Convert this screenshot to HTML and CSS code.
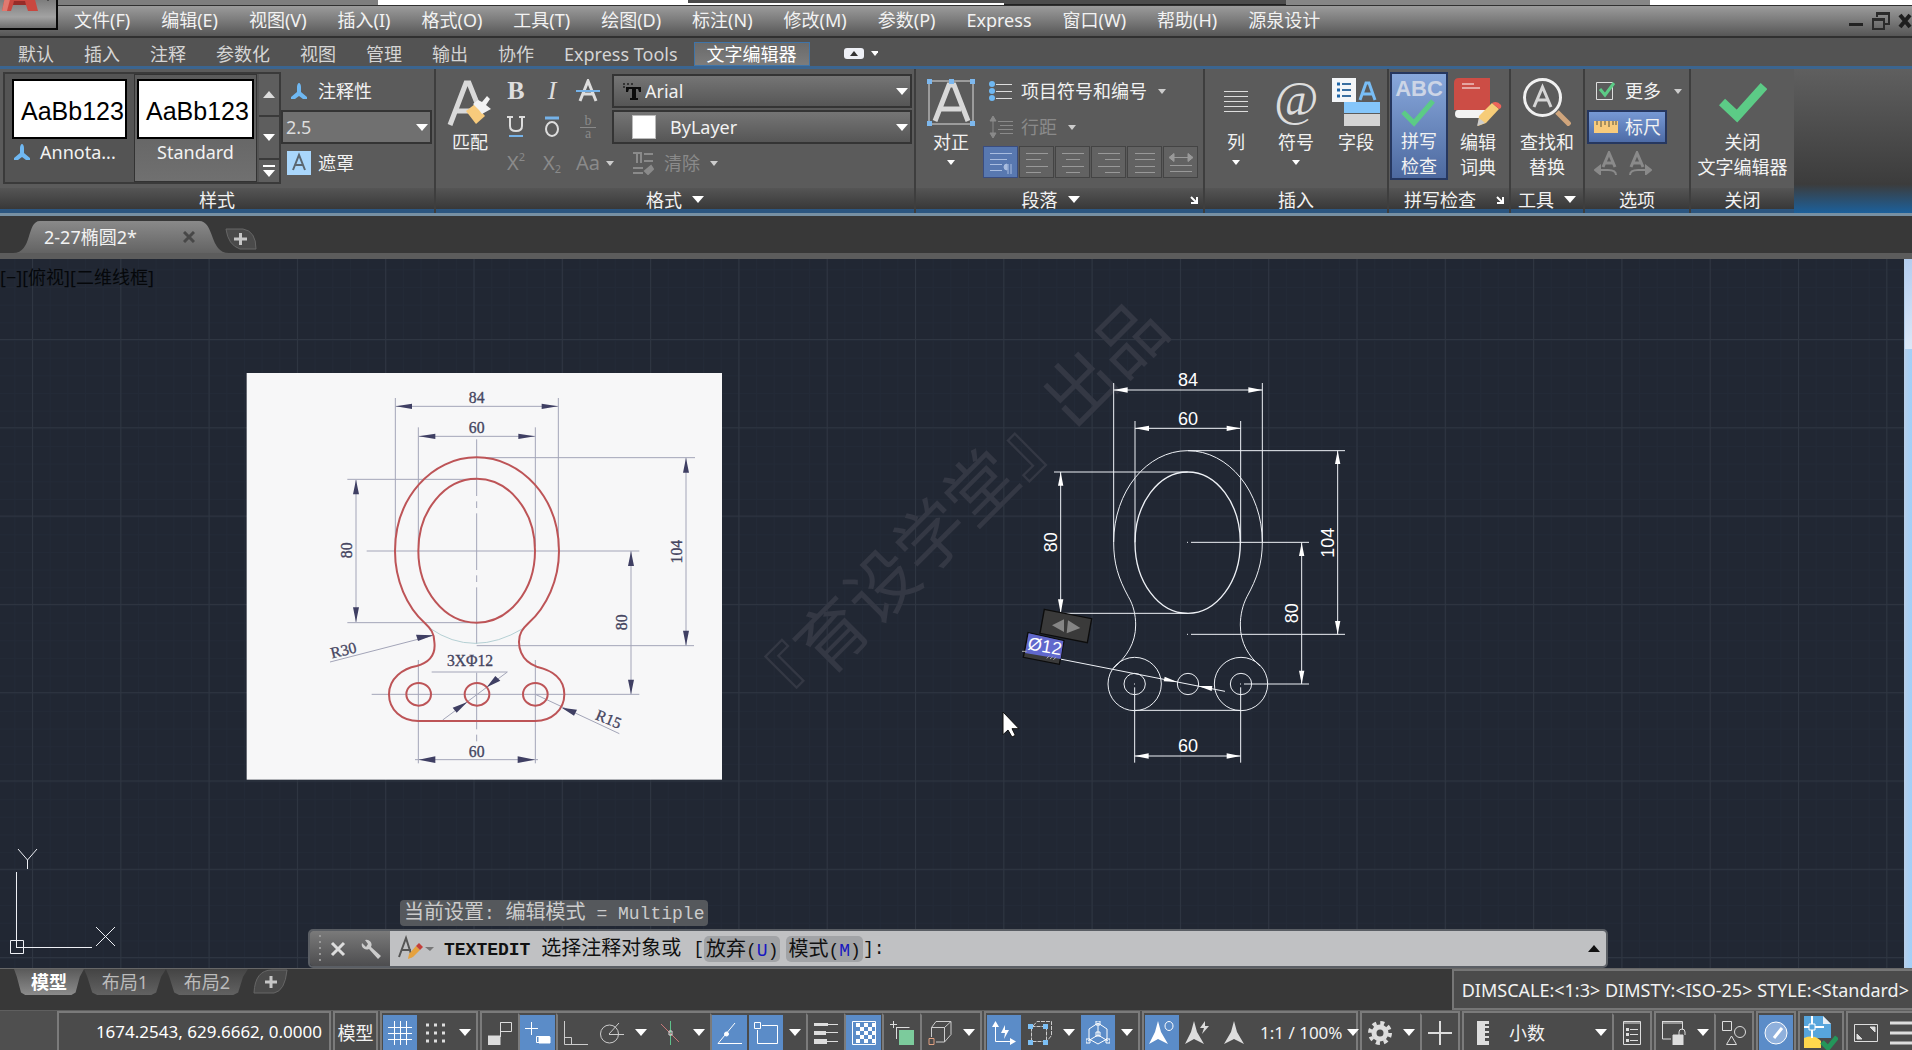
FILE: index.html
```html
<!DOCTYPE html>
<html lang="zh-CN">
<head>
<meta charset="utf-8">
<title>2-27椭圆2</title>
<link rel="stylesheet" href="styles.css">
</head>
<body>
<header class="top">
  <button class="app-logo" aria-label="应用程序菜单"><svg width="57" height="29" viewBox="0 0 57 29"><path d="M6 -8H33L38 11H28L26 5H13L11 11H2Z" fill="#c9473f"/><path d="M6 -8L2 11H7L12 -8Z" fill="#e07a70"/><path d="M13 5H26L25 1H14Z" fill="#962c28"/><path d="M46 -1h4l-2 2z" fill="#222"/></svg></button>
  <div class="strip"><i class="strip-a"></i><i class="strip-b"></i><i class="strip-c"></i><i class="strip-d"></i><i class="strip-e"></i></div>
  <nav class="menubar">
    <button>文件(F)</button><button>编辑(E)</button><button>视图(V)</button><button>插入(I)</button><button>格式(O)</button><button>工具(T)</button><button>绘图(D)</button><button>标注(N)</button><button>修改(M)</button><button>参数(P)</button><button>Express</button><button>窗口(W)</button><button>帮助(H)</button><button>源泉设计</button>
    <div class="winbtns">
      <button aria-label="最小化"><svg width="16" height="20"><path d="M1 12h14v3H1z" fill="#222"/></svg></button>
      <button aria-label="还原"><svg width="20" height="20" fill="none" stroke="#2a2a2a" stroke-width="2"><path d="M6 6V2h12v11h-4M6 3h12M2 8h11v10H2zM2 9h11"/></svg></button>
      <button aria-label="关闭"><svg width="14" height="20"><path d="M2 4l10 12M12 4L2 16" stroke="#1e1e1e" stroke-width="4"/></svg></button>
    </div>
  </nav>
  <nav class="tabs">
    <button>默认</button><button>插入</button><button>注释</button><button>参数化</button><button>视图</button><button>管理</button><button>输出</button><button>协作</button><button>Express Tools</button><button class="on">文字编辑器</button>
    <button class="mini" aria-label="最小化功能区"><svg width="34" height="12"><rect width="20" height="11" rx="3" fill="#eef0f6"/><path d="M6 8h8l-4-5z" fill="#333"/><path d="M27 3h8l-4 5z" fill="#fff"/></svg></button>
  </nav>
</header>

<main class="ribbon">
  <section class="panel p-style">
    <div class="body">
      <div class="gallery">
        <button class="sample"><span class="prev">AaBb123</span><span class="cap"><svg width="16" height="16" viewBox="0 0 16 16"><path d="M8 0C9 0 10 2 10 4V9L16 14V16H12L8 13L4 16H0V14L6 9V4C6 2 7 0 8 0Z" fill="#6fb8f2"/></svg>Annota...</span></button>
        <button class="sample sel"><span class="prev">AaBb123</span><span class="cap">Standard</span></button>
        <div class="scroll"><button aria-label="上一行"><i class="tri up"></i></button><button aria-label="下一行"><i class="tri"></i></button><button aria-label="展开"><svg width="14" height="14"><path d="M1 1h12v2H1zM1 6h12l-6 7z" fill="#fff"/></svg></button></div>
      </div>
      <div class="rows style-rows">
        <button class="line"><svg width="24" height="18" viewBox="-4 0 24 18"><path d="M8 1C9 1 10 3 10 5V10L16 15V17H12L8 14L4 17H0V15L6 10V5C6 3 7 1 8 1Z" fill="#6fb8f2"/></svg>注释性</button>
        <span class="combo flat"><select aria-label="文字高度"><option>2.5</option></select><i class="tri"></i></span>
        <button class="line"><svg width="24" height="24" viewBox="0 0 24 24"><path d="M0 0h24v24H0z" fill="#a9d6fb"/><path d="M6 19L12 4L18 19M8 14H16" fill="none" stroke="#5b6670" stroke-width="2"/></svg>遮罩</button>
      </div>
    </div>
    <h2>样式</h2>
  </section>

  <section class="panel p-format">
    <div class="body">
      <button class="big match"><svg width="48" height="48" viewBox="0 0 48 48"><path d="M4 47L20 5H23L33 30M10 33H28" fill="none" stroke="#d9d9d9" stroke-width="5"/><path d="M20 33L29 26L39 38L30 46Z" fill="#f8cb7c"/><path d="M27 26L33 32L36 36L45 31L40 27L44 21L41 18L36 24L32 22Z" fill="#f2f2f2"/></svg>匹配</button>
      <div class="glyphs">
        <button aria-label="粗体" class="serif b">B</button><button aria-label="斜体" class="serif it">I</button><button aria-label="删除线"><svg width="24" height="24"><path d="M4 22L12 2L20 22M7 15H17" fill="none" stroke="#ddd" stroke-width="3"/><path d="M0 12h24" stroke="#75b2e8" stroke-width="2"/></svg></button>
        <button aria-label="下划线"><svg width="20" height="24"><path d="M4 2V11Q4 16 10 16T16 11V2M1 2h6M13 2h6" fill="none" stroke="#ddd" stroke-width="2"/><path d="M3 21h14" stroke="#75b2e8" stroke-width="2"/></svg></button><button aria-label="上划线"><svg width="20" height="24"><ellipse cx="10" cy="14" rx="6" ry="7" fill="none" stroke="#ddd" stroke-width="2"/><path d="M3 3h14" stroke="#75b2e8" stroke-width="3"/></svg></button><button aria-label="堆叠" class="stack dim"><span>b</span><span>a</span></button>
        <button aria-label="上标" class="dim">X<sup>2</sup></button><button aria-label="下标" class="dim">X<sub>2</sub></button><button aria-label="更改大小写" class="dim">Aa</button>
      </div>
      <div class="rows format-rows">
        <span class="combo"><svg width="20" height="20"><path d="M1 3h2M5 3h2M9 3h2M1 6h2" stroke="#333" stroke-width="2"/><path d="M4 6H19V11H17L16 8H14V17H16V19H8V17H10V8H7L6 11H4Z" fill="#0b0b0b"/></svg><select aria-label="字体"><option>Arial</option></select><i class="tri"></i></span>
        <span class="combo layer"><i class="swatch"></i><select aria-label="颜色"><option>ByLayer</option></select><i class="tri"></i></span>
        <span class="line"><button aria-label="大小写菜单"><i class="tri sm"></i></button><button class="clear dim"><svg width="22" height="24" fill="none" stroke="#8a8a8a" stroke-width="2"><path d="M5 1v11M9 1v11M1 2h9M12 3h9M12 10h9M1 17h10M1 22h10"/><path d="M13 20l6-5 2 3-5 5z" fill="#8a8a8a"/></svg>清除<i class="tri sm"></i></button></span>
      </div>
    </div>
    <h2>格式<i class="tri"></i></h2>
  </section>

  <section class="panel p-para">
    <div class="body">
      <button class="big"><svg width="48" height="48" viewBox="0 0 48 48"><path d="M2 3H46V46H2Z" fill="none" stroke="#ddd"/><path d="M8 43L22 7H27L41 43M14 31H34" fill="none" stroke="#d8d8d8" stroke-width="5"/><path d="M0 1h5v5H0zM22 1h5v5h-5zM43 1h5v5h-5zM0 43h5v5H0zM43 43h5v5h-5z" fill="#7db8ee"/></svg>对正<i class="tri sm"></i></button>
      <div class="rows">
        <button class="line"><svg width="24" height="20" stroke="#ddd" stroke-width="1"><path d="M7 3.500h16M7 10.500h16M7 17.500h16"/><g fill="#6fb8f2" stroke="none"><circle cx="3" cy="3" r="3"/><circle cx="3" cy="10" r="3"/><circle cx="3" cy="17" r="3"/></g></svg>项目符号和编号<i class="tri sm"></i></button>
        <button class="line dim"><svg width="24" height="24" stroke="#8a8a8a" fill="#8a8a8a"><path d="M4 3v18M9 6.500h15M11 10.500h13M9 14.500h15M11 18.500h13"/><path d="M1 6L4 1l3 5zM1 18l3 5 3-5z"/></svg>行距<i class="tri sm"></i></button>
        <div class="align">
          <button class="on" aria-label="默认"><svg width="24" height="24" fill="none" stroke="#a9bde0"><path d="M1 3.500h22M1 9.500h17M1 14.500h12M1 20.500h12M19 14v10M22 14v10"/><path d="M18 20a3 3 0 0 1 0-6z" fill="#a9bde0"/></svg></button><button aria-label="左对齐"><svg width="24" height="24" stroke="#999"><path d="M1 3.500h22M1 9.500h15M1 16.500h22M1 22.500h15"/></svg></button><button aria-label="居中"><svg width="24" height="24" stroke="#999"><path d="M1 3.500h22M5 9.500h14M1 16.500h22M5 22.500h14"/></svg></button><button aria-label="右对齐"><svg width="24" height="24" stroke="#999"><path d="M1 3.500h22M8 9.500h15M1 16.500h22M8 22.500h15"/></svg></button><button aria-label="两端对齐"><svg width="24" height="24" stroke="#999"><path d="M2 3.500h20M2 9.500h20M2 16.500h20M2 22.500h20"/></svg></button><button aria-label="分散对齐"><svg width="24" height="24" stroke="#999" fill="#999"><path d="M3 7.500h18M1 15.500h22M1 21.500h22"/><path d="M0 7.500l5-4v8zM24 7.500l-5-4v8z"/></svg></button>
        </div>
      </div>
    </div>
    <h2 class="haslaunch">段落<i class="tri"></i><svg class="launch" width="8" height="8"><path d="M1 1l5 5M7 1v6H1" fill="none" stroke="#fff" stroke-width="2"/></svg></h2>
  </section>

  <section class="panel p-insert">
    <div class="body">
      <button class="big"><svg width="48" height="48" stroke="#ddd"><path d="M12 13.500h24M12 18.500h24M12 23.500h24M12 28.500h24M12 33.500h24"/></svg>列<i class="tri sm"></i></button>
      <button class="big"><span class="at">@</span>符号<i class="tri sm"></i></button>
      <button class="big"><svg width="48" height="48" viewBox="0 0 48 48"><path d="M0 0h24v24H0z" fill="#f4f6f8"/><path d="M5 6h3M5 12h3M5 18h3" stroke="#1e66a8" stroke-width="3"/><path d="M10 6h9M10 12h9M10 18h9" stroke="#3a6fa0" stroke-width="2"/><path d="M28 22L34 5H37L43 22M31 16H40" fill="none" stroke="#78bdf5" stroke-width="3"/><path d="M12 24h36v11H12z" fill="#84c6fb"/><path d="M12 36h36v12H12z" fill="#d4d4d4"/></svg>字段</button>
    </div>
    <h2>插入</h2>
  </section>

  <section class="panel p-spell">
    <div class="body">
      <button class="big on"><span class="abc">ABC</span><svg width="48" height="28" viewBox="0 0 48 28"><path d="M8 13L19 24L38 2" fill="none" stroke="#5ccb86" stroke-width="5"/></svg><span>拼写<br>检查</span></button>
      <button class="big"><svg width="48" height="48" viewBox="0 0 48 48"><path d="M5 0H36V32H0V5Q0 0 5 0Z" fill="#cc4d45"/><path d="M8 6H20M8 10H26" stroke="#fff"/><path d="M4 32H31V40H5Q1 40 1 36Q1 32 4 32Z" fill="#f3f3f3"/><path d="M25 38L38 25L45 31L32 45L24 48Z" fill="#f6cc78"/><path d="M38 25Q43 22 47 27Q48 30 45 31Z" fill="#f0645a"/><path d="M25 40L31 45L23 48Z" fill="#ccc"/></svg><span>编辑<br>词典</span></button>
    </div>
    <h2 class="haslaunch">拼写检查<svg class="launch" width="8" height="8"><path d="M1 1l5 5M7 1v6H1" fill="none" stroke="#fff" stroke-width="2"/></svg></h2>
  </section>

  <section class="panel p-tool">
    <div class="body">
      <button class="big"><svg width="48" height="48" viewBox="0 0 48 48"><circle cx="19.500" cy="19.500" r="18" fill="none" stroke="#f1f1f1" stroke-width="3"/><path d="M11 29L19.500 9L28 29M14 22H25" fill="none" stroke="#d6d6d6" stroke-width="3"/><path d="M34 34L47 47" stroke="#d0a57c" stroke-width="5"/></svg><span>查找和<br>替换</span></button>
    </div>
    <h2>工具<i class="tri"></i></h2>
  </section>

  <section class="panel p-opt">
    <div class="body">
      <div class="rows">
        <button class="line"><svg width="24" height="20" fill="none"><path d="M2.500 1.500h16v17h-16z" stroke="#ddd"/><path d="M6 8l5 6L20 2" stroke="#5ccb86" stroke-width="3"/></svg>更多<i class="tri sm"></i></button>
        <button class="line ruler"><svg width="24" height="12"><path d="M0 0h24v12H0z" fill="#f8cb7c"/><path d="M3 0v4M7 0v6M11 0v4M15 0v6M19 0v4M22 0v4" stroke="#554"/></svg>标尺</button>
        <span class="line undo"><button aria-label="放弃"><svg width="24" height="24" fill="none" stroke="#8a8a8a" stroke-width="2"><path d="M9 16L15 2L21 16M11 12h8" stroke-width="3"/><path d="M22 24q0-5-8-5H5"/><path d="M6 15L1 19l5 4z" fill="#8a8a8a"/></svg></button><button aria-label="重做"><svg width="24" height="24" fill="none" stroke="#8a8a8a" stroke-width="2"><path d="M3 16L9 2L15 16M5 12h8" stroke-width="3"/><path d="M2 24q0-5 8-5H19"/><path d="M18 15l5 4-5 4z" fill="#8a8a8a"/></svg></button></span>
      </div>
    </div>
    <h2>选项</h2>
  </section>

  <section class="panel p-close">
    <div class="body">
      <button class="big"><svg width="48" height="48" viewBox="0 0 48 48"><path d="M3 24L18 38L45 8" fill="none" stroke="#5ccb86" stroke-width="9"/></svg><span>关闭<br>文字编辑器</span></button>
    </div>
    <h2>关闭</h2>
  </section>
  <div class="rest"></div>
</main>

<nav class="doctabs">
  <div class="doctab"><svg class="tabshape" width="216" height="32" viewBox="0 0 216 32"><defs><linearGradient id="tg" x1="0" y1="0" x2="0" y2="1"><stop offset="0" stop-color="#8a8a8a"/><stop offset="1" stop-color="#636363"/></linearGradient></defs><path d="M0 32C20 32 13 0 27 0H186C202 0 196 32 216 32Z" fill="url(#tg)"/></svg><button class="name">2-27椭圆2*</button><button aria-label="关闭图形"><svg width="12" height="12"><path d="M1 1l10 10M11 1L1 11" stroke="#484848" stroke-width="3"/></svg></button></div>
  <button class="newtab" aria-label="新图形"><svg width="32" height="22"><path d="M1 1H18Q31 3 31 21H15Q3 17 1 1Z" fill="#4a4a4a" stroke="#666"/><path d="M9 11h13M15.500 5v12" stroke="#c6c6c6" stroke-width="3"/></svg></button>
</nav>

<section class="canvas">
  <svg class="sheet" width="100%" height="100%">
    <defs>
      <pattern id="minor" patternUnits="userSpaceOnUse" x="32" y="81" width="17.660" height="17.660"><path d="M0 .5H18M.5 0V18" stroke="#232a37"/></pattern>
      <pattern id="major" patternUnits="userSpaceOnUse" x="32" y="80" width="88.300" height="88.300"><path d="M0 .5H89M.5 0V89" stroke="#2f3642"/></pattern>
    </defs>
    <rect width="100%" height="100%" fill="#212733"/><rect width="100%" height="100%" fill="url(#minor)"/><rect width="100%" height="100%" fill="url(#major)"/>
    <text class="mark" transform="translate(955 252) rotate(-45)" text-anchor="middle" dominant-baseline="central">『育设学堂』出品</text>
    <svg x="240" y="101" width="490" height="430" viewBox="0 0 1470 1290">
      <rect x="20" y="39" width="1426" height="1220" fill="#f7f7f8"/>
      <g fill="none" stroke="#a3a5b8" stroke-width="3">
        <path d="M466 114V560M955 114V560M535 202V560M886 202V560M466 139H955M535 229H886M740 293H1365M322 358H710M322 788H700M348 360V786M1338 293V857M710 857H1362M1173 573V1003M380 573H1198M395 1003H1198M535 900V1210M886 900V1210M525 1199H894M575 936H802L608 1080M270 906L580 826M886 1003L1138 1121"/>
        <path d="M710 238V855M710 938V1145" stroke-dasharray="170 16 20 16"/>
        <path d="M570 805Q700 895 850 805" stroke="#b5d0d4"/>
      </g>
      <g fill="#3f3f63"><path d="M467 139l49-8v16zM954 139l-49-8v16zM536 229l50-8v16zM885 229l-50-8v16zM536 1199l50-10v20zM885 1199l-52-10v20zM348 359l-9 44h18zM348 787l-9-45h18zM1338 294l-9 44h18zM1338 857l-9-45h18zM1173 574l-9 44h18zM1173 1003l-9-44h18zM580 826l-52-2 6 19zM740 982l26-34 15 14zM682 1026l-44 17 12 15zM965 1043l46 6-9 18z"/></g>
      <g fill="none" stroke="#bd5457" stroke-width="6">
        <ellipse cx="710" cy="572" rx="175" ry="216"/>
        <path d="M535 1083C485 1083 447 1050 447 1003C447 955 490 925 530 918C595 900 583 850 583 845C583 820 572 806 555 790C500 740 465 660 465 573C465 415 575 292 710 292S957 415 957 573C957 660 920 740 865 790C848 806 837 820 837 845C837 850 835 900 890 920C935 930 973 955 973 1003C973 1050 935 1083 886 1083Z"/>
        <ellipse cx="536" cy="1003" rx="37" ry="34"/><ellipse cx="711" cy="1003" rx="37" ry="34"/><ellipse cx="886" cy="1003" rx="37" ry="34"/>
      </g>
      <g class="scan" text-anchor="middle">
        <text x="710" y="130">84</text><text x="710" y="220">60</text><text x="710" y="1190">60</text><text x="690" y="919">3XΦ12</text>
        <text transform="translate(336 571) rotate(-90)">80</text><text transform="translate(1325 575) rotate(-90)">104</text><text transform="translate(1161 787) rotate(-90)">80</text>
        <text transform="translate(314 886) rotate(-14)">R30</text><text transform="translate(1100 1092) rotate(22)">R15</text>
      </g>
    </svg>
    <svg x="980" y="91" width="400" height="430" viewBox="0 0 1200 1290">
      <g fill="none" stroke="#eef1f6" stroke-width="3">
        <path d="M401 99V577M847 99V577M465 213V577M782 213V577M401 120H847M465 235H782M623 302H1095M222 366H623M242 366V790M242 790H623M633 577H987M633 853H1095M1073 302V853M965 577V1002M792 1002H987M464 1012V1238M782 1012V1238M464 1218H782M464 1081H782"/>
        <path d="M240 927L735 1024M621 577h3M621 853h3M462 1002h3M780 1002h3"/>
        <ellipse cx="623" cy="578" rx="158" ry="212" stroke-width="4"/>
        <path d="M400 955C440 920 467 880 467 825C467 795 460 765 445 740C415 685 401 640 401 577C401 425 500 302 623 302S847 425 847 577C847 640 831 685 801 740C788 765 781 795 781 825C781 880 806 918 840 948"/>
        <circle cx="464" cy="1002" r="80"/><circle cx="783" cy="1002" r="80"/><circle cx="464" cy="1002" r="32"/><circle cx="624" cy="1002" r="32"/><circle cx="783" cy="1002" r="32"/>
      </g>
      <g fill="#fff"><path d="M401 120l42-8v16zM847 120l-42-8v16zM465 235l42-8v16zM782 235l-42-8v16zM464 1218l42-8v16zM782 1218l-42-8v16zM242 367l-8 40h16zM242 790l-8-42h16zM1073 302l-8 40h16zM1073 853l-8-40h16zM965 578l-8 40h16zM965 1002l-8-40h16zM592 996l-38-16-3 14zM655 1008l42 0-2 15z"/></g>
      <g class="dims" text-anchor="middle"><text x="624" y="108">84</text><text x="624" y="224">60</text><text x="624" y="1205">60</text>
        <text transform="translate(230 577) rotate(-90)">80</text><text transform="translate(953 790) rotate(-90)">80</text><text transform="translate(1061 578) rotate(-90)">104</text></g>
      <path d="M193 778L335 806L322 878L180 850Z" fill="#3a3a3a" stroke="#0c0c0c" stroke-width="4"/>
      <path d="M216 826L252 808V846ZM264 811L301 834L260 850Z" fill="#858585"/>
      <path d="M144 848L252 872L238 943L130 922Z" fill="#3a3a3a" stroke="#0c0c0c" stroke-width="4"/>
      <path d="M146 850L250 873L242 927L135 909Z" fill="#6168cc"/>
      <path d="M126 904h14M200 925l8-7M210 927l8-7M220 929l8-7" stroke="#aaa" stroke-width="3"/>
      <text class="dims" transform="translate(141 898) rotate(10)">Ø12</text>
      <path d="M69 1086V1154L84 1140L96 1161L106 1156L96 1136H117Z" fill="#fff" stroke="#111" stroke-width="3"/>
    </svg>
  </svg>
  <button class="viewlabel">[−][俯视][二维线框]</button>
  <svg class="ucs" width="130" height="120" fill="none" stroke="#eef0f5"><path d="M10.500 92.500h13v13h-13zM16.500 99V24M16 99.500h76M18 1l9.500 11L37 1M27.500 12v9M96 79l19 19M115 79l-19 19"/></svg>
  <div class="vbar"><i></i></div>
  <div class="cmd">
    <output class="history">当前设置<span>: </span>编辑模式<span> = Multiple</span></output>
    <div class="cmdline">
      <div class="cmdtools"><svg width="4" height="28"><path d="M2 0v28" stroke="#999" stroke-width="2" stroke-dasharray="2 4"/></svg><button aria-label="关闭命令行"><svg width="16" height="16"><path d="M2 2l12 12M14 2L2 14" stroke="#ddd" stroke-width="3"/></svg></button><button class="wrench" aria-label="自定义"><svg width="22" height="22" viewBox="0 0 22 22"><path d="M2 5a5 5 0 0 0 7 6l9 10 3-3-10-9a5 5 0 0 0-6-7l3 4-2 3z" fill="#ccc"/></svg></button></div>
      <div class="prompt"><svg width="36" height="28" fill="none"><path d="M1 22L8 3L14 22M4 15h9" stroke="#555" stroke-width="2"/><path d="M10 24l1-5 7-8 4 4-7 7z" fill="#e5a23f"/><path d="M18 11l3-3 4 4-3 3z" fill="#c33f3a"/><path d="M27 12h9l-4 4z" fill="#777"/></svg>
        <label for="ci"><b>TEXTEDIT </b>选择注释对象或</label><span class="m">[</span><button>放弃<span class="m">(<em>U</em>)</span></button><button>模式<span class="m">(<em>M</em>)</span></button><span class="m">]:</span><input id="ci" type="text"><button class="up" aria-label="历史"><i class="tri up"></i></button></div>
    </div>
  </div>
</section>

<footer class="bottom">
  <div class="layouts">
    <div class="ltabs"><button class="on">模型</button><button>布局1</button><button>布局2</button><button class="add" aria-label="新建布局"><svg width="36" height="26"><path d="M2 24Q3 1 20 1H35Q33 22 22 24Z" fill="#4a4a4a" stroke="#666"/><path d="M13 13h12M19 7v12" stroke="#c6c6c6" stroke-width="3"/></svg></button></div>
    <output class="dimscale">DIMSCALE:&lt;1:3&gt; DIMSTY:&lt;ISO-25&gt; STYLE:&lt;Standard&gt;</output>
  </div>
  <div class="status">
    <div class="grp coord">1674.2543, 629.6662, 0.0000</div>
    <div class="grp"><button class="space">模型</button></div>
    <div class="grp"><button class="on" aria-label="栅格"><svg width="24" height="24" stroke="#fff"><path d="M0 6.500h24M0 12.500h24M0 18.500h24M6.500 0v24M12.500 0v24M18.500 0v24"/></svg></button><button aria-label="捕捉"><svg width="20" height="20" stroke="#ddd" stroke-width="3" stroke-dasharray="3 5"><path d="M0 2h20M0 10h20M0 18h20"/></svg></button><button class="dd" aria-label="捕捉菜单"><i class="tri"></i></button></div>
    <div class="grp"><button aria-label="推断约束"><svg width="24" height="24" fill="none" stroke="#ddd"><path d="M12.500 1.500h11v9h-11zV16"/><path d="M0 15h12v9H0z" fill="#ddd"/></svg></button><button class="on sep" aria-label="动态输入"><svg width="26" height="24" fill="none" stroke="#fff"><path d="M0 7.500h13M6.500 1v13M11.500 15.500h13v6h-13z"/><path d="M14 16h11v6H14z" fill="#fff"/></svg></button><button class="sep" aria-label="正交"><svg width="24" height="24" fill="none" stroke="#ccc"><path d="M.5 0v23.500H24M.5 16.500h7v7"/></svg></button><button aria-label="极轴"><svg width="24" height="24" fill="none" stroke="#ccc"><circle cx="9.500" cy="13" r="9"/><path d="M9 13.500h15M9 13L19 2"/></svg></button><button class="dd" aria-label="极轴菜单"><i class="tri"></i></button><button aria-label="等轴测"><svg width="22" height="24" fill="none"><path d="M11.500 0v24" stroke="#5fc08a"/><path d="M2 3l18 18" stroke="#c87878"/><path d="M10 10h3v4h-3z" stroke="#ddd"/></svg></button><button class="dd" aria-label="等轴测菜单"><i class="tri"></i></button><button class="on sep" aria-label="对象捕捉追踪"><svg width="26" height="24" fill="none" stroke="#fff"><path d="M18 2L1 22.500H25"/><circle cx="9.500" cy="13" r="2" fill="#fff"/></svg></button><button class="on" aria-label="对象捕捉"><svg width="26" height="24" fill="none" stroke="#fff"><path d="M1.500 1.500h6v6h-6zM9 4.500h15.500V22.500H4.500V9"/></svg></button><button class="dd" aria-label="捕捉设置"><i class="tri"></i></button><button class="sep" aria-label="线宽"><svg width="26" height="24"><path d="M1 3.500h24M1 11.500h24M1 20.500h24" stroke="#ddd"/><path d="M1 2h14v3H1zM1 10h12v4H1zM1 18h13v5H1z" fill="#ddd"/></svg></button><button class="on sep" aria-label="透明度"><svg width="24" height="24"><path d="M.5.5h23v23H.5z" fill="none" stroke="#fff"/><path d="M4 2h4v4H4zM12 2h4v4h-4zM8 6h4v4H8zM16 6h4v4h-4zM4 10h4v4H4zM12 10h4v4h-4zM8 14h4v4H8zM16 14h4v4h-4zM4 18h4v4H4zM12 18h4v4h-4zM20 2h3v4h-3zM20 10h3v4h-3zM20 18h3v4h-3z" fill="#fff"/></svg></button><button class="sep" aria-label="选择循环"><svg width="24" height="24"><path d="M0 3.500h7M3.500 0v7M6.500 6.500h13M6.500 6v12" stroke="#ddd" fill="none"/><path d="M9 9h15v15H9z" fill="#7ccb9c"/></svg></button><button class="sep" aria-label="三维捕捉"><svg width="24" height="24" fill="none" stroke="#ccc"><path d="M3.500 16V6.500h13V21H8M3.500 6.500L8 .5h15v13L16.500 21M16.500 6.500L23 .5"/><path d="M1 17.500h5v6H1z" stroke="#e0a080"/></svg></button><button class="dd" aria-label="三维捕捉菜单"><i class="tri"></i></button></div>
    <div class="grp"><button class="on" aria-label="动态UCS"><svg width="24" height="24" fill="none" stroke="#fff"><path d="M3.500 3v17.500H20"/><path d="M0 6l3.500-6L7 6zM18 17l6 3.500-6 3.500zM13 4l-4 8h4l-1 6 5-9h-4z" fill="#fff" stroke="none"/></svg></button><button aria-label="选择过滤"><svg width="24" height="24" fill="none" stroke="#ccc"><path d="M3.500 5.500h15v15h-15zM5 5l4-4.500h14.500v14L19 20" stroke-dasharray="4 1"/><path d="M0 3h5v5H0zM15 3h5v5h-5zM0 19h5v5H0zM15 19h5v5h-5z" fill="#7cc0f5" stroke="none"/></svg></button><button class="dd" aria-label="过滤菜单"><i class="tri"></i></button><button class="on" aria-label="小控件"><svg width="24" height="24" fill="none" stroke="#fff"><path d="M12 2L3 8v10l9 5 9-5V8zM12 2v12L2 20M12 14l10 6M10 0h4v4h-4zM0 18h4v4H0zM20 18h4v4h-4zM10 11h4v4h-4z"/></svg></button><button class="dd" aria-label="小控件菜单"><i class="tri"></i></button></div>
    <div class="grp"><button class="on" aria-label="注释可见性"><svg width="26" height="24"><path d="M9 0l3 11 7 12-10-5L0 23 6 11z" fill="#fff"/><ellipse cx="20" cy="5" rx="4" ry="4.500" fill="none" stroke="#fff"/></svg></button><button aria-label="自动缩放"><svg width="26" height="24"><path d="M9 0l3 11 7 12-10-5L0 23 6 11z" fill="#ddd"/><path d="M20 0l-5 7h4l-2 6 7-8h-4z" fill="#ddd"/></svg></button><button aria-label="注释比例"><svg width="20" height="24"><path d="M10 0l3 11 7 12-10-5-10 5 7-12z" fill="#ddd"/></svg></button><button class="scale">1:1 / 100%<i class="tri"></i></button></div>
    <div class="grp"><button aria-label="工作空间"><svg width="24" height="24"><circle cx="12" cy="12" r="6" fill="none" stroke="#ddd" stroke-width="5"/><circle cx="12" cy="12" r="10" fill="none" stroke="#ddd" stroke-width="4" stroke-dasharray="4 3.850"/></svg></button><button class="dd" aria-label="工作空间菜单"><i class="tri"></i></button><button class="sep" aria-label="注释监视器"><svg width="24" height="24"><path d="M0 12h24M12 0v24" stroke="#ddd" stroke-width="2"/></svg></button></div>
    <div class="grp"><button class="units"><svg width="12" height="24"><path d="M0 0h12v3H8v2h4v2H8v3h4v2H8v3h4v2H8v3h4v4H0z" fill="#ddd"/></svg><span>小数</span><i class="tri"></i></button><button class="sep" aria-label="快捷特性"><svg width="18" height="24" fill="none" stroke="#ddd"><path d="M.5.5h17v23H.5zM0 2h18M7 8.500h8M7 13.500h8M7 19.500h8"/><path d="M3 7h3v3H3zM3 12h3v3H3zM3 18h3v3H3z" fill="#ddd" stroke="none"/></svg></button></div>
    <div class="grp"><button aria-label="锁定界面"><svg width="24" height="24" fill="none" stroke="#ddd"><path d="M.5.500h20v8M.5 0v18H9M0 2h20"/><path d="M11 14h10v10H11z" fill="#ddd"/><path d="M17 14v-3a3 3 0 0 1 6 0v3"/></svg></button><button class="dd" aria-label="锁定菜单"><i class="tri"></i></button><button class="sep" aria-label="隔离对象"><svg width="24" height="24" fill="none" stroke="#ddd"><path d="M.5.500h9v9h-9zM9.500 15l5 8.500h-10z"/><circle cx="18" cy="11" r="5.500"/></svg></button></div>
    <div class="grp"><button class="on" aria-label="硬件加速"><svg width="24" height="24" fill="none" stroke="#fff"><circle cx="12" cy="12" r="11" fill="#8fb0dc"/><path d="M10 17L18 7" stroke-width="3"/></svg></button></div>
    <div class="grp"><button class="file" aria-label="图形文件"><svg width="34" height="34"><path d="M0 0h19l8 8v14H0z" fill="#57a5dc"/><path d="M19 0v8h8z" fill="#e8eef4"/><path d="M0 22q10-4 17 3v7H0z" fill="#ffd84d"/><path d="M8 0v22M0 11h20" stroke="#fff" stroke-width="2"/><path d="M5 8h6v6H5z" fill="#57a5dc" stroke="#fff"/><path d="M18 26l6 6 9-11" fill="none" stroke="#24965a" stroke-width="5"/></svg></button></div>
    <div class="grp last"><button aria-label="全屏"><svg width="24" height="24" fill="none" stroke="#ddd"><path d="M.5 3.500h23v17H.5z"/><path d="M3 18v-5l5 5zM21 6v5l-5-5z" fill="#ddd"/></svg></button><button aria-label="自定义"><svg width="24" height="24"><path d="M0 2h24M0 12h24M0 22h24" stroke="#ddd" stroke-width="3"/></svg></button></div>
  </div>
</footer>
</body>
</html>
```
FILE: styles.css
```css
* { box-sizing: border-box; }
body {
  margin: 0; min-height: 100vh; display: flex; flex-direction: column; overflow: hidden;
  background: #383838; color: #f2f2f2;
  font: 18px/24px "Noto Sans", "Noto Sans CJK SC", sans-serif;
}
button, select, input { font: inherit; color: inherit; background: none; border: 0; padding: 0; margin: 0; border-radius: 0; }
button { white-space: nowrap; }
svg { display: block; flex: none; }
h2 { margin: 0; font-weight: 400; font-size: 18px; }

.tri { display: block; width: 0; height: 0; flex: none; border: 6px solid transparent; border-top: 7px solid #fff; border-bottom: 0; }
.tri.up { border-top: 0; border-bottom: 7px solid #ddd; }
.tri.sm { border-width: 5px 4px 0; }

/* title strip and menus */
.top { position: relative; }
.app-logo { position: absolute; left: 0; top: 0; width: 58px; height: 30px; overflow: hidden; background: linear-gradient(#7d7d7d, #a2a2a2 60%, #6f6f6f); border: solid #0a0a0a; border-width: 0 2px 2px 0; }
.strip { display: flex; height: 5px; background: #fff; }
.strip-a { width: 378px; background: #7e7e7e; }
.strip-b { width: 310px; }
.strip-c { width: 316px; background: #4a4a4a; border-bottom: 2px solid #fff; }
.strip-d { width: 282px; background: #4c4c4c; border-bottom: 1px solid #222; }
.strip-e { width: 364px; background: #868686; }
.menubar { display: flex; align-items: center; gap: 31px; height: 33px; padding-left: 74px; background: linear-gradient(#9b9b9b, #7d7d7d 45%, #565656); border-top: 1px solid #303030; border-bottom: 2px solid #303030; line-height: 22px; }
.menubar > button { padding-bottom: 2px; }
.winbtns { display: flex; gap: 7px; margin-left: auto; }
.tabs { display: flex; align-items: flex-end; height: 31px; padding-left: 3px; background: #535353; border-bottom: 3px solid #3b6590; color: #d5d5d5; }
.tabs button { height: 24px; line-height: 22px; padding: 0 15px; }
.tabs .on { padding: 0 12px; margin-left: 1px; border: 1px solid #3f74a8; background: linear-gradient(#6a6a6a, #7c7c7c); color: #fff; line-height: 20px; }
.tabs .mini { margin-left: 19px; padding: 4px 15px; }

/* ribbon */
.ribbon { display: flex; border-bottom: 3px solid #7790a3; background: #5b5b5b; }
.panel { flex: none; display: flex; flex-direction: column; border-right: 2px solid #3e3e3e; }
.body { display: flex; height: 119px; }
.panel h2 { height: 25px; display: flex; align-items: center; justify-content: center; gap: 10px; position: relative; background: linear-gradient(#555, #383838); border-bottom: 4px solid #2c5680; padding-top: 2px; }
.panel .haslaunch { padding-right: 18px; }
.launch { position: absolute; right: 5px; top: 8px; }
.rest { flex: 1; background: linear-gradient(#5f5f5f, #3c3c3c 80%, #1c609b); }
.p-style { width: 436px; }
.p-format { width: 480px; }
.p-para { width: 289px; }
.p-insert { width: 184px; }
.p-spell { width: 122px; }
.p-tool { width: 74px; }
.p-opt { width: 106px; }
.p-close { width: 103px; border-right: 0; }

.gallery { display: flex; gap: 2px; height: 112px; margin: 3px 0 0 3px; border: 2px solid #3a3a3a; background: #545454; }
.sample { width: 127px; padding: 4px 4px 0 6px; display: flex; flex-direction: column; border: 1px solid transparent; }
.sample.sel { background: linear-gradient(#5a5a5a, #707070); border: 1px solid #333; width: 123px; padding: 4px 2px 0; }
.prev { height: 60px; width: 100%; padding-left: 7px; border: 2px solid #000; background: #fff; color: #000; font: 25px/60px "Liberation Sans", Arial, sans-serif; text-align: left; overflow: hidden; }
.cap { display: flex; gap: 10px; align-items: center; justify-content: center; width: 100%; height: 26px; }
.sample:first-child .cap { justify-content: flex-start; padding-left: 2px; }
.scroll { display: grid; grid-template-rows: 41px 1fr 22px; width: 20px; gap: 2px; background: #3a3a3a; }
.scroll button { display: grid; place-items: center; background: #5e5e5e; }

.rows { display: grid; grid-template-rows: 34px 34px 34px; gap: 2px; align-content: start; padding-top: 5px; }
.line { display: flex; align-items: center; gap: 7px; }
.style-rows { grid-template-columns: 151px; }
.style-rows .line { padding-left: 6px; }
.combo { display: flex; align-items: center; height: 34px; padding: 0 2px 0 8px; border: 2px solid #343434; background: linear-gradient(#757575, #565656); }
.combo select { flex: 1; appearance: none; padding-left: 3px; outline: 0; }
.combo.flat { background: #707070; padding-left: 0; color: #ddd; }
.swatch { width: 24px; height: 24px; margin: 0 11px 0 10px; background: #fff; border: 1px solid #bbb; }
.dim { color: #8a8a8a; }
.dim .tri, .line .tri { border-top-color: #ccc; }

.big { display: flex; flex-direction: column; align-items: center; padding-top: 9px; text-align: center; line-height: 25px; }
.big > svg, .big .at { margin-bottom: 4px; }
.big .tri { margin-top: 5px; }
.match { width: 56px; margin-left: 6px; }
.glyphs { display: grid; grid-template: repeat(3, 34px) / repeat(3, 36px); gap: 2px 0; padding-top: 5px; }
.glyphs button { display: grid; grid-auto-flow: column; place-content: center; place-items: center; font-size: 20px; }
.glyphs .serif { font: bold 26px/34px "Liberation Serif", serif; color: #ddd; }
.glyphs .it { font-weight: 400; font-style: italic; }
.glyphs .stack { grid-auto-flow: row; font: 14px/12px "Liberation Serif", serif; }
.stack span:first-child { border-bottom: 1px solid #8a8a8a; width: 16px; }
.glyphs sup, .glyphs sub { font-size: 11px; line-height: 12px; }
.glyphs sup { align-self: start; }
.glyphs sub { align-self: end; }
.format-rows { grid-template-columns: 306px; }
.format-rows .combo { margin-left: 6px; }
.clear { display: flex; align-items: center; gap: 10px; margin-left: 11px; }
.p-para .big { width: 44px; margin: 0 10px 0 13px; }
.p-para .line { gap: 8px; padding-left: 6px; }
.p-para .line .tri { margin-left: 3px; }
.align { display: flex; gap: 1px; }
.align button { width: 35px; height: 32px; display: grid; place-items: center; border: 1px solid #444; background: #626262; }
.align .on { background: #5878b0; border-color: #3a4d80; }
.p-insert .body { padding-left: 1px; }
.p-insert .big { width: 60px; }
.at { height: 48px; width: 44px; font: italic 48px/42px "Liberation Serif", serif; color: #ddd; }
.p-spell .big { width: 60px; }
.p-spell .on { width: 58px; height: 108px; margin: 3px 0 0 1px; padding-top: 5px; background: linear-gradient(#88a8dc, #4d699f); border: 2px solid #26375f; }
.p-spell .on svg { margin-bottom: 2px; }
.abc { font: bold 22px/20px "Liberation Sans", Arial, sans-serif; color: #ccd5e6; }
.p-tool .big, .p-close .big { width: 100%; }
.p-opt .rows { grid-template-columns: 80px; padding-left: 2px; }
.p-opt .line { padding-left: 7px; }
.p-opt .line .tri { margin-left: 6px; }
.p-opt .ruler { border: 2px solid #26375f; background: linear-gradient(#7799d4, #4d6ba6); padding-left: 5px; }
.p-opt .undo { gap: 10px; }

/* document tabs */
.doctabs { display: flex; align-items: flex-end; height: 43px; padding-left: 13px; border-bottom: 6px solid #5c5c5c; background: #383838; }
.doctab { position: relative; width: 212px; height: 32px; display: flex; align-items: center; gap: 46px; padding-left: 31px; }
.doctab button { position: relative; }
.tabshape { position: absolute; left: 0; top: 0; }
.newtab { margin-bottom: 3px; }

/* drawing area */
.canvas { position: relative; flex: 1; min-height: 560px; background: #212733; overflow: hidden; }
.sheet { position: absolute; inset: 0; }
.mark { font-size: 70px; fill: #343844; }
.scan { font: 47px "Liberation Serif", serif; fill: #454560; stroke: #454560; stroke-width: 1px; }
.dims { font: 54px "Liberation Sans", Arial, sans-serif; fill: #fff; }
.viewlabel { position: absolute; left: 0; top: 6px; color: #05070a; }
.ucs { position: absolute; left: 0; bottom: 0; }
.vbar { position: absolute; right: 0; top: 0; bottom: 0; width: 8px; background: linear-gradient(90deg, #b9cfe9, #9fd0fa); }
.vbar i { display: block; height: 90px; margin-left: 1px; background: linear-gradient(#b3cdf0, #dbe8f8); }
.cmd { position: absolute; left: 308px; right: 304px; bottom: 0; font-size: 20px; }
.cmd span, .cmd b, .cmd .m { font-family: "Liberation Mono", "Noto Sans CJK SC", monospace; font-size: 18px; white-space: pre; }
.history { display: block; width: fit-content; margin: 0 0 3px 92px; padding: 0 4px; border-radius: 4px; background: #55585c; color: #ccc; }
.cmdline { display: flex; height: 39px; border: 2px solid #5a5e64; border-radius: 5px; overflow: hidden; }
.cmdtools { display: flex; align-items: center; gap: 8px; width: 80px; padding-left: 8px; background: linear-gradient(#7a7a7a, #4d4d4f); }
.wrench { margin-left: 6px; }
.prompt { flex: 1; display: flex; align-items: center; background: #c0c1c3; color: #111; padding: 0 4px 0 8px; }
.prompt label { margin: 0 12px 0 10px; }
.prompt button { background: #a1a3a6; border-radius: 5px; height: 26px; margin-right: 6px; line-height: 26px; padding: 0 2px; }
.prompt button + .m { margin-left: -6px; }
.prompt em { font-style: normal; color: #1717c0; }
.prompt input { flex: 1; min-width: 0; outline: 0; }
.prompt .up { background: none; margin: 0; }
.prompt .tri.up { border-bottom-color: #111; }

/* layouts and status */
.layouts { display: flex; justify-content: space-between; height: 42px; border-top: 1px solid #676767; }
.ltabs { display: flex; padding-left: 14px; height: 27px; }
.ltabs button { width: 82px; height: 26px; line-height: 26px; color: #bbb; background: linear-gradient(#444, #626262); clip-path: polygon(0 0, 100% 0, 94% 30%, 88% 90%, 82% 100%, 16% 100%, 10% 90%, 4% 30%); }
.ltabs .on { width: 70px; color: #fff; font-weight: 700; background: linear-gradient(#5a5a5a, #8b8b8b); }
.ltabs .add { width: 38px; clip-path: none; background: none; margin-left: 4px; }
.dimscale { border: 2px solid #767676; border-right: 0; background: #4b4b4b; padding: 7px 3px 0 8px; white-space: nowrap; }
.status { display: flex; gap: 2px; height: 40px; padding-left: 57px; background: #4f4f4f; border-top: 1px solid #5f5f5f; }
.grp { display: flex; flex: none; border: solid #7b7b7b; border-width: 2px 2px 0; background: #4b4b4b; }
.grp button { display: grid; place-items: center; flex: none; width: 36px; border: 1px solid transparent; border-width: 2px 1px 0; }
.grp .on { background: #5b8cc8; background-clip: padding-box; }
.grp .sep { border-left: 2px solid #7b7b7b; width: 38px; }
.grp .dd { width: 22px; }
.coord { width: 274px; justify-content: flex-end; align-items: center; padding-right: 7px; font-size: 17px; color: #fff; }
.grp .space { width: 41px; }
.grp .scale { display: flex; align-items: center; gap: 5px; width: 104px; padding-left: 7px; font-size: 17px; }
.grp .units { display: flex; align-items: center; gap: 20px; width: 148px; padding: 0 4px 0 12px; }
.grp .file { width: 42px; }
.units .tri { margin-left: auto; }
.last { flex: 1; border-right: 0; overflow: hidden; }
```
